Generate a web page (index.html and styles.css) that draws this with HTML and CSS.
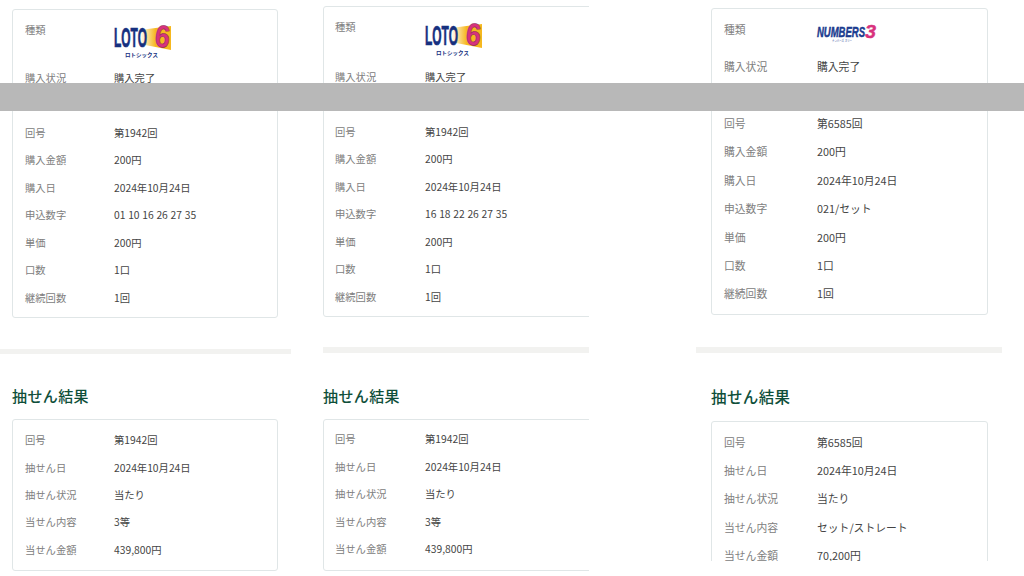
FILE: index.html
```html
<!DOCTYPE html>
<html lang="ja">
<head>
    <meta charset="UTF-8">
    <meta name="viewport" content="width=device-width, initial-scale=1.0">
    <title>購入履歴</title>
    <link rel="stylesheet" href="styles.css">
</head>
<body>
    <div class="stage">
        <!-- left shot -->
        <section class="shot shot-a">
            <div class="card">
                <div class="row row-logo">
                    <span class="label">種類</span>
                    <svg class="logo" width="58" height="33" viewBox="0 0 58 33">
                        <defs>
                            <linearGradient id="fadeA" x1="0" x2="1" y1="0" y2="0">
                                <stop offset="0" stop-color="#fff"/>
                                <stop offset="0.5" stop-color="#f6b81f"/>
                            </linearGradient>
                        </defs>
                        <polygon points="26,6 57,2 57,26 26,20" fill="url(#fadeA)"/>
                        <text x="0" y="22.5" class="logo-loto" textLength="33" lengthAdjust="spacingAndGlyphs">LOTO</text>
                        <text x="41" y="23" class="logo-six" textLength="15" lengthAdjust="spacingAndGlyphs" transform="rotate(6 48 12)">6</text>
                        <text x="11" y="32.5" class="logo-kana" textLength="33" lengthAdjust="spacingAndGlyphs">ロトシックス</text>
                    </svg>
                </div>
                <div class="row"><span class="label">購入状況</span><span class="value">購入完了</span></div>
                <div class="row"></div>
                <div class="row"><span class="label">回号</span><span class="value">第1942回</span></div>
                <div class="row"><span class="label">購入金額</span><span class="value">200円</span></div>
                <div class="row"><span class="label">購入日</span><span class="value">2024年10月24日</span></div>
                <div class="row"><span class="label">申込数字</span><span class="value">01 10 16 26 27 35</span></div>
                <div class="row"><span class="label">単価</span><span class="value">200円</span></div>
                <div class="row"><span class="label">口数</span><span class="value">1口</span></div>
                <div class="row"><span class="label">継続回数</span><span class="value">1回</span></div>
            </div>
            <div class="divider"></div>
            <h2 class="result-title">抽せん結果</h2>
            <div class="card card-result">
                <div class="row"><span class="label">回号</span><span class="value">第1942回</span></div>
                <div class="row"><span class="label">抽せん日</span><span class="value">2024年10月24日</span></div>
                <div class="row"><span class="label">抽せん状況</span><span class="value">当たり</span></div>
                <div class="row"><span class="label">当せん内容</span><span class="value">3等</span></div>
                <div class="row"><span class="label">当せん金額</span><span class="value">439,800円</span></div>
            </div>
        </section>

        <!-- middle shot, cut off on the right -->
        <section class="shot shot-b">
            <div class="card">
                <div class="row row-logo">
                    <span class="label">種類</span>
                    <svg class="logo" width="58" height="33" viewBox="0 0 58 33">
                        <defs>
                            <linearGradient id="fadeB" x1="0" x2="1" y1="0" y2="0">
                                <stop offset="0" stop-color="#fff"/>
                                <stop offset="0.5" stop-color="#f6b81f"/>
                            </linearGradient>
                        </defs>
                        <polygon points="26,6 57,2 57,26 26,20" fill="url(#fadeB)"/>
                        <text x="0" y="22.5" class="logo-loto" textLength="33" lengthAdjust="spacingAndGlyphs">LOTO</text>
                        <text x="41" y="23" class="logo-six" textLength="15" lengthAdjust="spacingAndGlyphs" transform="rotate(6 48 12)">6</text>
                        <text x="11" y="32.5" class="logo-kana" textLength="33" lengthAdjust="spacingAndGlyphs">ロトシックス</text>
                    </svg>
                </div>
                <div class="row"><span class="label">購入状況</span><span class="value">購入完了</span></div>
                <div class="row"></div>
                <div class="row"><span class="label">回号</span><span class="value">第1942回</span></div>
                <div class="row"><span class="label">購入金額</span><span class="value">200円</span></div>
                <div class="row"><span class="label">購入日</span><span class="value">2024年10月24日</span></div>
                <div class="row"><span class="label">申込数字</span><span class="value">16 18 22 26 27 35</span></div>
                <div class="row"><span class="label">単価</span><span class="value">200円</span></div>
                <div class="row"><span class="label">口数</span><span class="value">1口</span></div>
                <div class="row"><span class="label">継続回数</span><span class="value">1回</span></div>
            </div>
            <div class="divider"></div>
            <h2 class="result-title">抽せん結果</h2>
            <div class="card card-result">
                <div class="row"><span class="label">回号</span><span class="value">第1942回</span></div>
                <div class="row"><span class="label">抽せん日</span><span class="value">2024年10月24日</span></div>
                <div class="row"><span class="label">抽せん状況</span><span class="value">当たり</span></div>
                <div class="row"><span class="label">当せん内容</span><span class="value">3等</span></div>
                <div class="row"><span class="label">当せん金額</span><span class="value">439,800円</span></div>
            </div>
        </section>

        <!-- right shot, cut off at the bottom -->
        <section class="shot shot-c">
            <div class="card">
                <div class="row row-logo">
                    <span class="label">種類</span>
                    <svg class="logo" width="60" height="18" viewBox="0 0 60 18">
                        <text x="0" y="13" class="logo-numbers" textLength="48" lengthAdjust="spacingAndGlyphs">NUMBERS</text>
                        <text x="48" y="14" class="logo-three" textLength="11" lengthAdjust="spacingAndGlyphs">3</text>
                        <text x="15" y="17.5" class="logo-numbers-kana" textLength="20" lengthAdjust="spacingAndGlyphs">ナンバーズ スリー</text>
                    </svg>
                </div>
                <div class="row"><span class="label">購入状況</span><span class="value">購入完了</span></div>
                <div class="row"></div>
                <div class="row"><span class="label">回号</span><span class="value">第6585回</span></div>
                <div class="row"><span class="label">購入金額</span><span class="value">200円</span></div>
                <div class="row"><span class="label">購入日</span><span class="value">2024年10月24日</span></div>
                <div class="row"><span class="label">申込数字</span><span class="value">021/セット</span></div>
                <div class="row"><span class="label">単価</span><span class="value">200円</span></div>
                <div class="row"><span class="label">口数</span><span class="value">1口</span></div>
                <div class="row"><span class="label">継続回数</span><span class="value">1回</span></div>
            </div>
            <div class="divider"></div>
            <h2 class="result-title">抽せん結果</h2>
            <div class="card card-result">
                <div class="row"><span class="label">回号</span><span class="value">第6585回</span></div>
                <div class="row"><span class="label">抽せん日</span><span class="value">2024年10月24日</span></div>
                <div class="row"><span class="label">抽せん状況</span><span class="value">当たり</span></div>
                <div class="row"><span class="label">当せん内容</span><span class="value">セット/ストレート</span></div>
                <div class="row"><span class="label">当せん金額</span><span class="value">70,200円</span></div>
            </div>
        </section>

        <div class="mask-bar"></div>
    </div>
</body>
</html>
```

FILE: styles.css
```css
* {
    box-sizing: border-box;
}
html, body {
    margin: 0;
    padding: 0;
    background: #fff;
}
body {
    font-family: "Noto Sans CJK JP", "Noto Sans", sans-serif;
    color: #333;
    overflow: hidden;
}
.stage {
    position: relative;
    display: flex;
    width: 1024px;
    height: 576px;
    overflow: hidden;
}

/* each shot has its own scale */
.shot {
    flex: none;
    overflow: hidden;
    font-size: var(--font);
    word-spacing: 0.4px;
}
.shot-a {
    --font: 10.3px;
    --row: 27.5px;
    --row-result: 27.3px;
    --label-w: 89px;
    --first-row: 48.2px;
    width: 291px;
    height: 576px;
    padding: 9px 13px 0 12px;
}
.shot-b {
    --font: 10.3px;
    --row: 27.5px;
    --row-result: 27.5px;
    --label-w: 90px;
    --first-row: 50.2px;
    width: 266px;
    height: 576px;
    margin-left: 32px;
    padding: 6px 0 0 0;
}
.shot-c {
    --font: 10.8px;
    --row: 28.4px;
    --row-result: 28.4px;
    --label-w: 93px;
    --first-row: 37px;
    width: 306px;
    height: 561px;
    margin-left: 107px;
    padding: 8px 14px 0 15px;
}

.card {
    border: 1px solid #e0e6e7;
    border-radius: 3px;
    padding: 5.5px 12px;
    background: #fff;
}
.shot-b .card {
    width: 290px;
    padding-left: 11px;
}
.shot-c .card {
    padding: 6px 12px;
}
.shot-a .card-result {
    padding-top: 6.5px;
    padding-bottom: 7px;
}
.shot-b .card-result {
    padding-top: 5.5px;
    padding-bottom: 7px;
}
.row {
    display: flex;
    align-items: center;
    height: var(--row);
}
.card-result .row {
    height: var(--row-result);
}
.row-logo {
    align-items: flex-start;
    height: var(--first-row);
    line-height: var(--row);
}
.label {
    flex: none;
    width: var(--label-w);
    color: #808080;
}
.value {
    color: #444;
}
.logo {
    display: block;
    margin-top: 8.5px;
    overflow: visible;
}
.shot-b .logo {
    margin-top: 9.5px;
}
.shot-c .logo {
    margin-top: 9px;
}

.divider {
    height: 5px;
    margin-top: 31px;
    background: #f2f2f0;
}
.shot-a .divider {
    margin-left: -12px;
    margin-right: -13px;
}
.shot-b .divider {
    margin-top: 30px;
    height: 6px;
}
.shot-c .divider {
    height: 6px;
    margin-top: 32px;
    margin-left: -15px;
    margin-right: -14px;
}
.result-title {
    margin: 31px 0 12px 0;
    font-size: 15px;
    line-height: 22px;
    font-weight: 500;
    letter-spacing: 0.4px;
    color: #0f4f3a;
}
.shot-b .result-title {
    margin-top: 32px;
}
.shot-c .result-title {
    font-size: 15.5px;
    margin-top: 32px;
    margin-bottom: 14px;
}

/* logos */
.logo-loto {
    font-family: "Liberation Sans", sans-serif;
    font-size: 27px;
    font-weight: 700;
    fill: #16307f;
    stroke: #16307f;
    stroke-width: 0.7px;
}
.logo-six {
    font-family: "Liberation Sans", sans-serif;
    font-size: 31px;
    font-weight: 700;
    fill: #d8327d;
    stroke: #8a2a5a;
    stroke-width: 0.6px;
}
.logo-kana {
    font-size: 5.5px;
    font-weight: 700;
    fill: #16307f;
}
.logo-numbers {
    font-family: "Liberation Sans", sans-serif;
    font-size: 15px;
    font-weight: 700;
    font-style: italic;
    fill: #1b3c8f;
    stroke: #1b3c8f;
    stroke-width: 0.5px;
}
.logo-three {
    font-family: "Liberation Sans", sans-serif;
    font-size: 19px;
    font-weight: 700;
    font-style: italic;
    fill: #d8327d;
    stroke: #d8327d;
    stroke-width: 0.4px;
}
.logo-numbers-kana {
    font-size: 3.5px;
    fill: #1b3c8f;
}

/* grey strip that hides a row in all three shots */
.mask-bar {
    position: absolute;
    top: 83px;
    left: 0;
    width: 100%;
    height: 28px;
    background: #b8b8b8;
}
```
